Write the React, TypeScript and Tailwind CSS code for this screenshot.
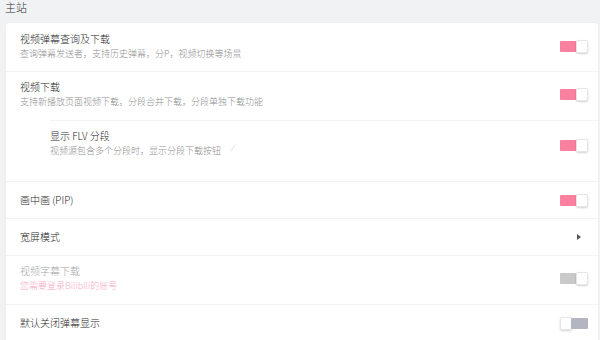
import React from 'react';

const font = { fontFamily: '"Noto Sans CJK SC", "Noto Sans", sans-serif' };

const Toggle = ({ on = true, disabled = false }: { on?: boolean; disabled?: boolean }) =>
  on ? (
    <div className="flex items-center">
      <div
        className={`w-[17px] h-[11px] rounded-[1px] ${disabled ? 'bg-[#c9c9c9]' : 'bg-[#f9809f]'}`}
      />
      <div className="-ml-px w-[12px] h-[13px] rounded-[2px] bg-white border border-[#e6e6e6] shadow-[0_1px_2px_rgba(0,0,0,0.18)]" />
    </div>
  ) : (
    <div className="flex items-center">
      <div className="w-[12px] h-[13px] rounded-[2px] bg-white border border-[#e6e6e6] shadow-[0_1px_2px_rgba(0,0,0,0.18)]" />
      <div className="-ml-px w-[17px] h-[11px] rounded-[1px] bg-[#b3b6c0]" />
    </div>
  );

interface RowProps {
  title: string;
  desc?: string;
  descClass?: string;
  titleClass?: string;
  right?: React.ReactNode;
  className?: string;
}

const Row = ({ title, desc, descClass, titleClass, right, className }: RowProps) => (
  <div className={`flex items-center justify-between pr-[10px] ${className ?? ''}`}>
    <div className="flex flex-col">
      <div className={`text-[10px] leading-[14px] font-light ${titleClass ?? 'text-[#1f1f1f]'}`}>
        {title}
      </div>
      {desc && (
        <div
          className={`mt-px text-[9px] leading-[14px] font-light ${descClass ?? 'text-[#8f8f8f]'}`}
        >
          {desc}
        </div>
      )}
    </div>
    {right}
  </div>
);

export default function App() {
  return (
    <div className="w-[600px] h-[340px] overflow-hidden bg-[#f1f2f4] flex flex-col" style={font}>
      {/* Section header */}
      <div className="h-[23px] shrink-0 pl-[5px] text-[11px] leading-[15px] font-light text-[#333]">
        主站
      </div>

      <div className="flex-1 ml-[6px] mr-[2px] bg-white rounded-t-[3px] shadow-[0_0_2px_rgba(0,0,0,0.06)]">
        <Row
          className="pl-[14px] pt-[9px] pb-[10px] border-b border-[#f3f3f3]"
          title="视频弹幕查询及下载"
          desc="查询弹幕发送者，支持历史弹幕，分P，视频切换等场景"
          right={<Toggle />}
        />
        <Row
          className="pl-[14px] pt-[8px] pb-[11px]"
          title="视频下载"
          desc="支持新播放页面视频下载，分段合并下载，分段单独下载功能"
          right={<Toggle />}
        />
        {/* Sub option */}
        <div className="ml-[44px] border-t border-[#f3f3f3]">
          <div className="relative">
            <Row
              className="pt-[8px] pb-[23px]"
              title="显示 FLV 分段"
              desc="视频源包含多个分段时，显示分段下载按钮"
              right={
                <div className="mt-[3px]">
                  <Toggle />
                </div>
              }
            />
            <svg className="absolute left-[180px] top-[23px]" width="6" height="8" viewBox="0 0 6 8">
              <path d="M0.5 7.5 L5.5 0.5" stroke="#d8d8d8" strokeWidth="0.8" />
            </svg>
          </div>
        </div>
        <div className="border-t border-[#f3f3f3]" />
        <Row
          className="pl-[14px] py-[11px] border-b border-[#f3f3f3]"
          title="画中画 (PIP)"
          right={<Toggle />}
        />
        <Row
          className="pl-[14px] py-[11px] border-b border-[#f3f3f3]"
          title="宽屏模式"
          right={
            <svg className="mr-[7px]" width="4" height="6" viewBox="0 0 4 6">
              <path d="M0 0 L4 3 L0 6 Z" fill="#555" />
            </svg>
          }
        />
        <Row
          className="pl-[14px] pt-[8px] pb-[11px] border-b border-[#f3f3f3]"
          title="视频字幕下载"
          titleClass="text-[#a8a8a8]"
          desc="您需要登录Bilibili的账号"
          descClass="text-[#f7a9c4]"
          right={<Toggle disabled />}
        />
        <Row
          className="pl-[14px] pt-[11px] pb-[11px]"
          title="默认关闭弹幕显示"
          right={<Toggle on={false} />}
        />
      </div>
    </div>
  );
}
